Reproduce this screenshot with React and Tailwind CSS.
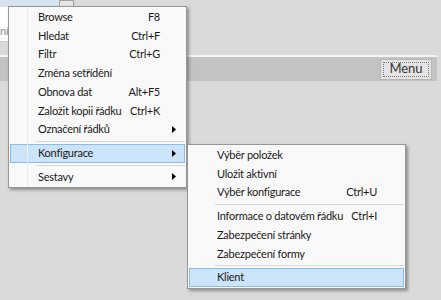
const mainItems = [
  { label: 'Browse', key: 'F8' },
  { label: 'Hledat', key: 'Ctrl+F' },
  { label: 'Filtr', key: 'Ctrl+G' },
  { label: 'Změna setřídění' },
  { label: 'Obnova dat', key: 'Alt+F5' },
  { label: 'Založit kopii řádku', key: 'Ctrl+K' },
  { label: 'Označení řádků', sub: true },
  { sep: true },
  { label: 'Konfigurace', sub: true, active: true },
  { sep: true },
  { label: 'Sestavy', sub: true },
];

const subItems = [
  { label: 'Výběr položek' },
  { label: 'Uložit aktivní' },
  { label: 'Výběr konfigurace', key: 'Ctrl+U' },
  { sep: true },
  { label: 'Informace o datovém řádku', key: 'Ctrl+I' },
  { label: 'Zabezpečení stránky' },
  { label: 'Zabezpečení formy' },
  { sep: true },
  { label: 'Klient', active: true },
];

function Arrow() {
  return (
    <svg width="4" height="7" viewBox="0 0 4 7" className="block">
      <polygon points="0,0 4,3.5 0,7" fill="#000" />
    </svg>
  );
}

function MenuRow({ item, keyRight }) {
  if (item.sep) {
    return (
      <div className="h-[5px] flex items-center pl-[26px]">
        <div className="h-px w-full bg-[#d7d7d7]" />
      </div>
    );
  }
  return (
    <div
      className={`h-[18.7px] flex items-center border ${
        item.active ? 'bg-[#cce4f9] border-[#8cbcec]' : 'border-transparent'
      }`}
    >
      <span className="pl-[27px] flex-1 whitespace-nowrap">{item.label}</span>
      {item.key && <span className="whitespace-nowrap" style={{ marginRight: keyRight }}>{item.key}</span>}
      {item.sub && (
        <span className="mr-[8px]">
          <Arrow />
        </span>
      )}
    </div>
  );
}

export default function App() {
  return (
    <div
      className="relative w-[441px] h-[300px] overflow-hidden bg-[#dadada] text-[11px] tracking-[-0.25px] text-[#1a1a1a]"
      style={{ fontFamily: 'Lato, "Noto Sans", sans-serif' }}
    >
      {/* background window */}
      <div className="h-[7px] flex">
        <div className="w-[59px] bg-[#d6e3f1]" />
        <div className="w-[15px] bg-[#e6e6e6] border border-[#a0a0a0]" />
      </div>
      <div className="h-[35px] w-[140px] bg-white border-b border-[#c8c8c8] flex items-center pt-[14px] text-[#8a8a8a] text-[11px]">
        ní
      </div>
      <div className="h-[13px]" />
      <div className="h-[2px] w-[437px] bg-[#f4f4f4]" />
      <div className="h-[24px] w-[437px] bg-[#c3c3c3] flex items-center justify-end pr-[5px]">
        <div className="w-[52px] h-[21px] bg-[#e4e4e4] border border-[#b5b5b5] flex items-center justify-center">
          <div className="w-[46px] h-[15px] border border-dotted border-[#777] flex items-center justify-center text-[13px] tracking-normal text-[#333]">
            Menu
          </div>
        </div>
      </div>

      {/* main context menu */}
      <div className="absolute left-[8px] top-[6px] w-[179px] bg-[#f9f9f9] border border-[#979797] py-[1px] px-[1px] shadow-[2px_2px_3px_rgba(0,0,0,0.35)]">
        <div className="absolute left-[18px] top-0 bottom-0 w-px bg-[#eeeeee]" />
        {mainItems.map((item, i) => (
          <MenuRow key={i} item={item} keyRight="24px" />
        ))}
      </div>

      {/* submenu */}
      <div className="absolute left-[187px] top-[144px] w-[219px] bg-[#f9f9f9] border border-[#979797] py-[1px] px-[1px] shadow-[2px_2px_3px_rgba(0,0,0,0.35)]">
        {subItems.map((item, i) => (
          <MenuRow key={i} item={item} keyRight="26px" />
        ))}
      </div>
    </div>
  );
}
